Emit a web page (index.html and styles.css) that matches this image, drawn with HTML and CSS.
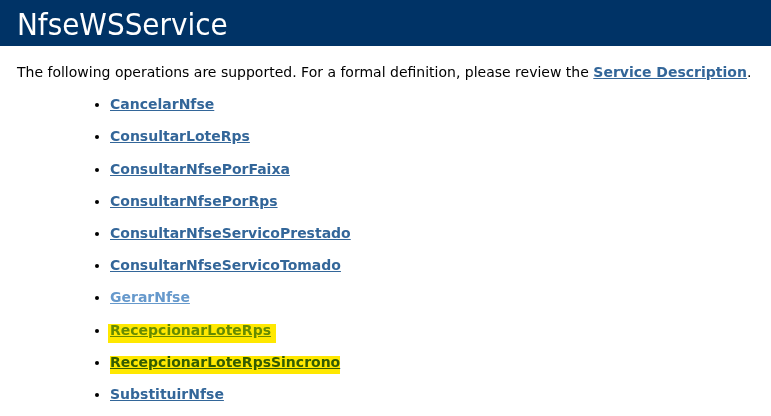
FILE: index.html
```html
<!DOCTYPE html>
<html lang="en">
<head>
  <meta charset="UTF-8">
  <title>NfseWSService Web Service</title>
  <link rel="stylesheet" href="styles.css">
</head>
<body>
  <div id="content">
    <p class="heading1">NfseWSService</p>
    <p class="intro">The following operations are supported. For a formal definition, please review the <a href="#">Service Description</a>.</p>
    <!-- lista de operações -->
    <ul class="ops">
      <li><a href="#">CancelarNfse</a></li>
      <li><a href="#">ConsultarLoteRps</a></li>
      <li><a href="#">ConsultarNfsePorFaixa</a></li>
      <li><a href="#">ConsultarNfsePorRps</a></li>
      <li><a href="#">ConsultarNfseServicoPrestado</a></li>
      <li><a href="#">ConsultarNfseServicoTomado</a></li>
      <li><a href="#" class="visited">GerarNfse</a></li>
      <li><span class="mark mark-a"><a href="#" class="visited">RecepcionarLoteRps</a></span></li>
      <li><span class="mark mark-b"><a href="#">RecepcionarLoteRpsSincrono</a></span></li>
      <li><a href="#">SubstituirNfse</a></li>
    </ul>
  </div>
</body>
</html>
```

FILE: styles.css
```css
/* Estilização geral */
body {
  color: #000;
  background: #fff;
  font-family: "DejaVu Sans", Verdana, sans-serif;
  margin: 0;
  overflow: hidden;
}
#content {
  font-size: 14px;
}
a {
  color: #336699;
  font-weight: bold;
  text-decoration: underline;
}
a.visited {
  color: #6699cc;
}
/* Cabeçalho */
.heading1 {
  margin: 0;
  height: 46px;
  box-sizing: border-box;
  padding: 6px 0 0 17px;
  background: #003366;
  color: #fff;
  font-family: "DejaVu Sans Condensed", Tahoma, sans-serif;
  font-size: 31px;
  line-height: 36px;
}
.intro {
  margin: 18px 0 0 17px;
  line-height: 17px;
}
/* Lista de operações */
.ops {
  margin: 6px 0 0 0;
  padding-left: 110px;
}
.ops li {
  line-height: 17px;
  margin-top: 15.2px;
}
/* Marca-texto amarelo */
.mark {
  position: relative;
  display: inline-block;
}
.mark::after {
  content: "";
  position: absolute;
  background: #ffe800;
  mix-blend-mode: multiply;
  pointer-events: none;
}
.mark-a::after {
  left: -2px;
  right: -5px;
  top: 2px;
  bottom: -4px;
}
.mark-b::after {
  left: 0;
  right: 0;
  top: 2px;
  bottom: -3px;
}
```
